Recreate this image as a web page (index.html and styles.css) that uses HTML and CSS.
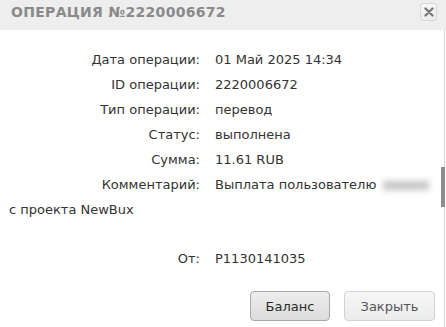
FILE: index.html
```html
<!DOCTYPE html>
<html lang="ru">
<head>
<meta charset="utf-8">
<link rel="stylesheet" href="styles.css">
</head>
<body>
<div class="dialog">
  <div class="titlebar">
    <span class="title">ОПЕРАЦИЯ №2220006672</span>
    <button class="close" type="button" aria-label="Закрыть">
      <svg width="10" height="10" viewBox="0 0 10 10"><path d="M1.5 1.5 L8.5 8.5 M8.5 1.5 L1.5 8.5" stroke="#7a7a7a" stroke-width="2.4" stroke-linecap="round"/></svg>
    </button>
  </div>
  <div class="body">
    <div class="row"><span class="label">Дата операции:</span><span class="value">01 Май 2025 14:34</span></div>
    <div class="row"><span class="label">ID операции:</span><span class="value">2220006672</span></div>
    <div class="row"><span class="label">Тип операции:</span><span class="value">перевод</span></div>
    <div class="row"><span class="label">Статус:</span><span class="value">выполнена</span></div>
    <div class="row"><span class="label">Сумма:</span><span class="value">11.61 RUB</span></div>
    <div class="row"><span class="label">Комментарий:</span><span class="value">Выплата пользователю <span class="blurred" aria-hidden="true"></span> с проекта NewBux</span></div>
    <div class="row spacer"></div>
    <div class="row"><span class="label">От:</span><span class="value">P1130141035</span></div>
  </div>
  <div class="buttons">
    <button class="btn btn-active" type="button">Баланс</button>
    <button class="btn btn-close" type="button">Закрыть</button>
  </div>
  <div class="scrolltrack"><div class="scrollthumb"></div></div>
</div>
</body>
</html>
```
FILE: styles.css
```css
*, *::before, *::after {
  box-sizing: border-box;
}
html, body {
  margin: 0;
  padding: 0;
  background: #fff;
}
.dialog {
  position: relative;
  width: 446px;
  height: 327px;
  overflow: hidden;
  font-family: "DejaVu Sans", sans-serif;
  color: #333;
}
.titlebar {
  height: 30px;
  background: #eeeeee;
  display: flex;
  align-items: flex-start;
  justify-content: space-between;
  padding: 3px 9px 0 11px;
}
.title {
  font-family: "DejaVu Sans", sans-serif;
  font-weight: bold;
  font-size: 14px;
  line-height: 18px;
  letter-spacing: 0.3px;
  color: #8a8a8a;
}
.close {
  width: 17px;
  height: 18px;
  padding: 0;
  border: 1px solid #d8d8d8;
  border-radius: 3px;
  background: linear-gradient(#f8f8f8, #ececec);
  display: flex;
  align-items: center;
  justify-content: center;
}
.body {
  padding: 17px 9px 0 9px;
  font-size: 13px;
  line-height: 25px;
}
.label {
  display: inline-block;
  width: 191px;
  text-align: right;
  margin-right: 15px;
}
.spacer {
  height: 24px;
}
.blurred {
  display: inline-block;
  background: #c4c4c4;
  filter: blur(3px);
  height: 9px;
  width: 46px;
  margin-left: 2px;
  vertical-align: middle;
}
.buttons {
  display: flex;
  justify-content: flex-end;
  gap: 14px;
  padding: 20px 11px 0 0;
}
.btn {
  height: 30px;
  padding: 0;
  font-family: "DejaVu Sans", sans-serif;
  font-size: 13px;
  border-radius: 4px;
}
.btn-active {
  width: 80px;
  color: #2b2b2b;
  border: 1px solid #a8a8a8;
  background: linear-gradient(#ededed, #dcdcdc);
}
.btn-close {
  width: 91px;
  color: #555;
  border: 1px solid #d3d3d3;
  background: linear-gradient(#f6f6f6, #ececec);
}
.scrolltrack {
  position: absolute;
  top: 30px;
  right: 1px;
  bottom: 0;
  width: 1px;
  background: #d9d9d9;
}
.scrollthumb {
  position: absolute;
  top: 137px;
  right: 0;
  width: 4px;
  height: 40px;
  background: #8d8d8d;
}
```
